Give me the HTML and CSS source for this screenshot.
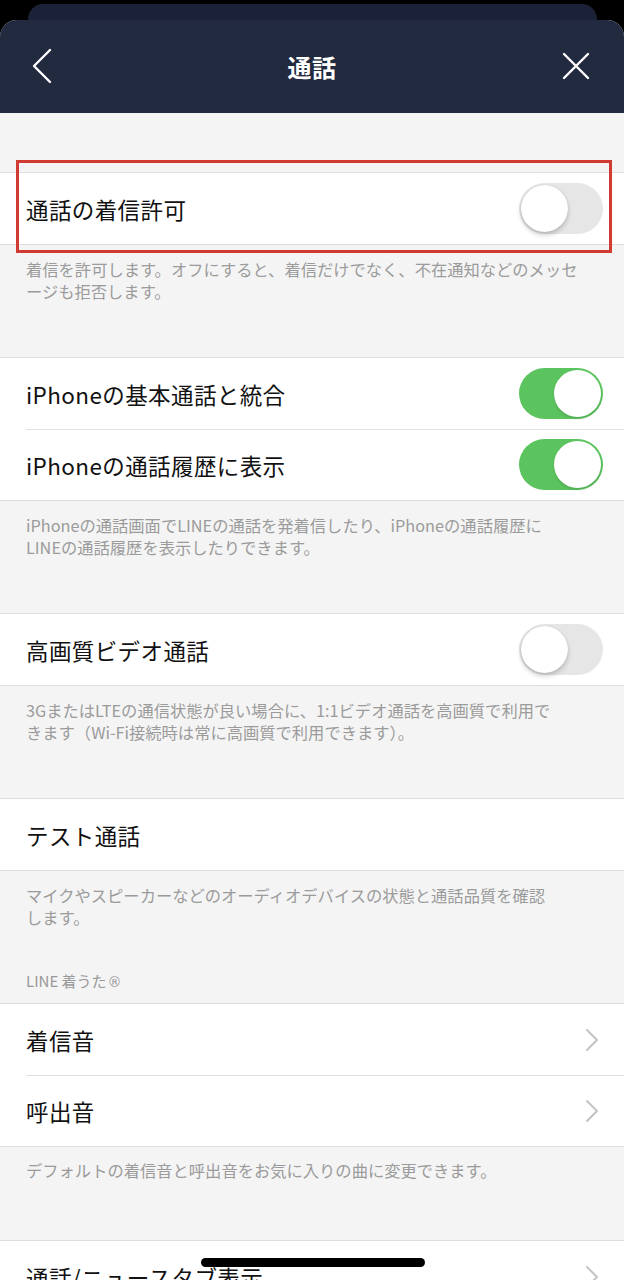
FILE: index.html
```html
<!DOCTYPE html>
<html lang="ja">
<head>
<meta charset="utf-8">
<link rel="stylesheet" href="styles.css">
</head>
<body>
<div class="screen">
  <div class="backcard"></div>
  <div class="sheet">
    <header class="topbar">
      <svg class="nav-icon back" width="24" height="36" viewBox="0 0 24 36"><path d="M20 2 L4 18 L20 34" fill="none" stroke="#fff" stroke-width="2.4" stroke-linecap="round" stroke-linejoin="round"/></svg>
      <h1 class="title">通話</h1>
      <svg class="nav-icon close" width="30" height="30" viewBox="0 0 30 30"><path d="M3 3 L27 27 M27 3 L3 27" fill="none" stroke="#fff" stroke-width="2.4" stroke-linecap="round"/></svg>
    </header>
    <main class="content">
      <div class="spacer-top"></div>

      <section class="group">
        <div class="row"><span class="label">通話の着信許可</span><span class="switch"><span class="knob"></span></span></div>
        <div class="highlight-box"></div>
      </section>
      <p class="note">着信を許可します。オフにすると、着信だけでなく、不在通知などのメッセ<br>ージも拒否します。</p>

      <section class="group">
        <div class="row"><span class="label">iPhoneの基本通話と統合</span><span class="switch on"><span class="knob"></span></span></div>
        <div class="row"><span class="label">iPhoneの通話履歴に表示</span><span class="switch on"><span class="knob"></span></span></div>
      </section>
      <p class="note">iPhoneの通話画面でLINEの通話を発着信したり、iPhoneの通話履歴に<br>LINEの通話履歴を表示したりできます。</p>

      <section class="group">
        <div class="row"><span class="label">高画質ビデオ通話</span><span class="switch"><span class="knob"></span></span></div>
      </section>
      <p class="note">3GまたはLTEの通信状態が良い場合に、1:1ビデオ通話を高画質で利用で<br>きます（Wi-Fi接続時は常に高画質で利用できます）。</p>

      <section class="group">
        <div class="row"><span class="label">テスト通話</span></div>
      </section>
      <p class="note short">マイクやスピーカーなどのオーディオデバイスの状態と通話品質を確認<br>します。</p>
      <p class="group-label">LINE 着うた<span class="reg">®</span></p>

      <section class="group">
        <div class="row"><span class="label">着信音</span><svg class="chev" width="14" height="24" viewBox="0 0 14 24"><path d="M2 2 L12 12 L2 22" fill="none" stroke="#c4c4c7" stroke-width="2" stroke-linecap="round" stroke-linejoin="round"/></svg></div>
        <div class="row"><span class="label">呼出音</span><svg class="chev" width="14" height="24" viewBox="0 0 14 24"><path d="M2 2 L12 12 L2 22" fill="none" stroke="#c4c4c7" stroke-width="2" stroke-linecap="round" stroke-linejoin="round"/></svg></div>
      </section>
      <p class="note last">デフォルトの着信音と呼出音をお気に入りの曲に変更できます。</p>

      <section class="group">
        <div class="row"><span class="label">通話/ニュースタブ表示</span><svg class="chev" width="14" height="24" viewBox="0 0 14 24"><path d="M2 2 L12 12 L2 22" fill="none" stroke="#c4c4c7" stroke-width="2" stroke-linecap="round" stroke-linejoin="round"/></svg></div>
      </section>
    </main>
  </div>
  <div class="home-indicator"></div>
</div>
</body>
</html>
```

FILE: styles.css
```css
* { box-sizing: border-box; }
html, body { margin: 0; padding: 0; }
body {
  background: #000;
  font-family: "Noto Sans CJK JP", "Noto Sans", sans-serif;
  width: 624px;
  height: 1280px;
  overflow: hidden;
}
.screen {
  position: relative;
  width: 624px;
  height: 1280px;
  overflow: hidden;
  background: #000;
  padding-top: 4px;
}
.backcard {
  height: 30px;
  margin: 0 27px -14px 28px;
  background: #1b2136;
  border-radius: 15px 15px 0 0;
}
.sheet {
  position: relative;
  background: #f4f4f4;
  border-radius: 17px 17px 0 0;
  overflow: hidden;
  height: 1300px;
}
.topbar {
  height: 93px;
  background: #222a40;
  display: grid;
  grid-template-columns: 1fr auto 1fr;
  align-items: center;
  padding: 0 33px 0 30px;
}
.title {
  margin: 0 0 0 3px;
  color: #fff;
  font-size: 24px;
  font-weight: 700;
  letter-spacing: 0.5px;
}
.nav-icon { display: block; margin-top: -2px; }
.nav-icon.close { justify-self: end; }
.spacer-top { height: 59px; }
.group {
  position: relative;
  background: #fff;
  border-top: 1px solid #dedede;
  border-bottom: 1px solid #dedede;
}
.row {
  height: 71px;
  display: flex;
  align-items: center;
  justify-content: space-between;
  padding: 0 21px 0 26px;
  position: relative;
}
.row + .row::before {
  content: "";
  position: absolute;
  left: 26px;
  right: 0;
  top: 0;
  border-top: 1px solid #e0e0e0;
}
.label {
  font-size: 22.5px;
  color: #111;
  letter-spacing: 0.4px;
}
.switch {
  width: 84px;
  height: 51px;
  border-radius: 26px;
  background: #e6e6e7;
  position: relative;
  display: block;
  flex: none;
}
.switch .knob {
  position: absolute;
  top: 2px;
  left: 2px;
  width: 47px;
  height: 47px;
  border-radius: 50%;
  background: #fff;
  box-shadow: 0 3px 5px rgba(0,0,0,0.2), 0 0 1px rgba(0,0,0,0.2);
}
.switch.on { background: #5cc45f; }
.switch.on .knob { left: 35px; box-shadow: 0 2px 3px rgba(0,0,0,0.12); }
.chev { display: block; margin-right: 4px; }
.note {
  margin: 0;
  padding: 13px 26px 55px;
  font-size: 16.3px;
  line-height: 22px;
  color: #9b9b9b;
  white-space: nowrap;
}
.note.short { padding-bottom: 42px; }
.note.last { padding: 12px 26px 59px; }
.group-label {
  margin: 0;
  padding: 0 26px 10px;
  font-size: 15px;
  line-height: 22px;
  color: #999;
}
.reg {
  font-family: "DejaVu Sans", sans-serif;
  font-size: 14px;
  margin-left: 1px;
}
.highlight-box {
  position: absolute;
  left: 16px;
  right: 12px;
  top: -13px;
  bottom: -9px;
  border: 3px solid #d13a33;
  pointer-events: none;
}
.home-indicator {
  position: absolute;
  left: 201px;
  top: 1258px;
  width: 224px;
  height: 9px;
  border-radius: 5px;
  background: #000;
}
```
